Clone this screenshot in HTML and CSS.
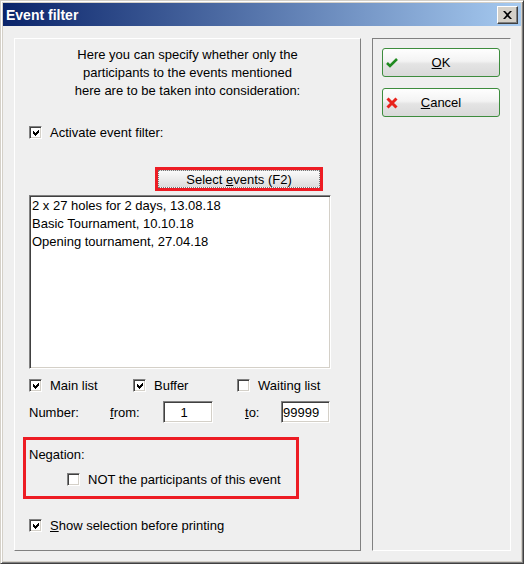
FILE: index.html
```html
<!DOCTYPE html>
<html lang="en">
<head>
    <meta charset="UTF-8">
    <title>Event filter</title>
    <link rel="stylesheet" href="styles.css">
</head>
<body>
    <div class="window">
        <div class="titlebar">
            <span class="title">Event filter</span>
            <button class="close-btn">
                <svg width="9" height="8" viewBox="0 0 9 8"><path d="M0 0h2l2.5 2.5L7 0h2L5.5 4 9 8H7L4.5 5.5 2 8H0l3.5-4z" fill="#000"/></svg>
            </button>
        </div>

        <div class="content">
            <!-- Filter settings -->
            <div class="panel panel-main">
                <p class="intro">Here you can specify whether only the<br>participants to the events mentioned<br>here are to be taken into consideration:</p>

                <label class="check row-activate">
                    <span class="box"><svg viewBox="0 0 9 9"><path d="M1 3l2 2 4-4v3L3 8 1 6z"/></svg></span>
                    Activate event filter:
                </label>

                <div class="mark select-mark">
                    <button class="select-btn">Select <u>e</u>vents (F2)</button>
                </div>

                <div class="listbox">
                    <div>2 x 27 holes for 2 days, 13.08.18</div>
                    <div>Basic Tournament, 10.10.18</div>
                    <div>Opening tournament, 27.04.18</div>
                </div>

                <div class="lists">
                    <label class="check">
                        <span class="box"><svg viewBox="0 0 9 9"><path d="M1 3l2 2 4-4v3L3 8 1 6z"/></svg></span>
                        Main list
                    </label>
                    <label class="check">
                        <span class="box"><svg viewBox="0 0 9 9"><path d="M1 3l2 2 4-4v3L3 8 1 6z"/></svg></span>
                        Buffer
                    </label>
                    <label class="check">
                        <span class="box"></span>
                        Waiting list
                    </label>
                </div>

                <div class="number-row">
                    <span>Number:</span>
                    <span><u>f</u>rom:</span>
                    <span class="field field-from">1</span>
                    <span><u>t</u>o:</span>
                    <span class="field field-to">99999</span>
                </div>

                <div class="mark negation">
                    <div class="negation-label">Negation:</div>
                    <label class="check negation-check">
                        <span class="box"></span>
                        NOT the participants of this event
                    </label>
                </div>

                <label class="check row-show">
                    <span class="box"><svg viewBox="0 0 9 9"><path d="M1 3l2 2 4-4v3L3 8 1 6z"/></svg></span>
                    <span><u>S</u>how selection before printing</span>
                </label>
            </div>

            <!-- Dialog buttons -->
            <div class="panel panel-side">
                <button class="action-btn">
                    <svg width="13" height="10" viewBox="0 0 13 10"><path d="M1 5l3 3 7-7" fill="none" stroke="#1f8a1f" stroke-width="2.6"/></svg>
                    <span><u>O</u>K</span>
                </button>
                <button class="action-btn">
                    <svg width="12" height="12" viewBox="0 0 12 12"><path d="M1.5 1.5l9 9M10.5 1.5l-9 9" fill="none" stroke="#e8231c" stroke-width="3"/></svg>
                    <span><u>C</u>ancel</span>
                </button>
            </div>
        </div>
    </div>
</body>
</html>
```

FILE: styles.css
```css
body {
    margin: 0;
    font-family: "Liberation Sans", Arial, sans-serif;
    font-size: 13px;
    color: #000;
    background: #fff;
}

.window {
    width: 524px;
    height: 564px;
    box-sizing: border-box;
    display: flex;
    flex-direction: column;
    padding: 2px;
    background: #d4d0c8;
    border: 1px solid;
    border-color: #d4d0c8 #404040 #404040 #d4d0c8;
    box-shadow: inset 1px 1px #fff, inset -1px -1px #808080;
}

/* Title bar */
.titlebar {
    flex: none;
    height: 23px;
    display: flex;
    align-items: center;
    justify-content: space-between;
    padding: 0 3px 0 3px;
    background: linear-gradient(to right, #0a246a, #a6caf0);
}

.title {
    color: #fff;
    font-weight: bold;
    font-size: 14px;
}

.close-btn {
    width: 21px;
    height: 18px;
    padding: 0;
    display: flex;
    align-items: center;
    justify-content: center;
    background: #d4d0c8;
    border: 1px solid;
    border-color: #fff #404040 #404040 #fff;
    box-shadow: inset -1px -1px #808080;
}

.content {
    flex: 1;
    display: flex;
    gap: 11px;
    padding: 12px 10px 10px 11px;
    background: #efefef;
}

.panel {
    box-sizing: border-box;
    border: 1px solid;
}

.panel-main {
    width: 347px;
    display: flex;
    flex-direction: column;
    align-items: flex-start;
    border-color: #fff #808080 #808080 #fff;
}

.panel-side {
    width: 139px;
    display: flex;
    flex-direction: column;
    gap: 11px;
    padding: 9px 0 0 9px;
    border-color: #808080 #fff #fff #808080;
}

.intro {
    align-self: stretch;
    margin: 7px 0 0;
    line-height: 18px;
    text-align: center;
}

/* Checkboxes */
.check {
    height: 18px;
    display: flex;
    align-items: center;
    gap: 8px;
    white-space: nowrap;
}

.box {
    width: 13px;
    height: 13px;
    box-sizing: border-box;
    display: flex;
    align-items: center;
    justify-content: center;
    flex: none;
    background: #fff;
    border: 1px solid;
    border-color: #808080 #fff #fff #808080;
    box-shadow: inset 1px 1px #404040, inset -1px -1px #d4d0c8;
}

.box svg {
    width: 9px;
    height: 9px;
    margin: 1px 0 0 1px;
    shape-rendering: crispEdges;
}

.row-activate {
    margin: 23px 0 0 14px;
}

/* Red highlight frames */
.mark {
    box-sizing: border-box;
    border: 3px solid #ed1c24;
}

.select-mark {
    width: 168px;
    height: 24px;
    margin: 26px 0 0 140px;
}

.select-btn {
    width: 100%;
    height: 100%;
    padding: 0;
    font: inherit;
    color: #000;
    border: 1px dotted #777;
    background: linear-gradient(#fafafa, #ececec 50%, #dcdcdc);
}

.listbox {
    width: 302px;
    height: 174px;
    box-sizing: border-box;
    margin: 4px 0 0 14px;
    padding: 1px 2px;
    line-height: 18px;
    background: #fff;
    border: 1px solid;
    border-color: #808080 #fff #fff #808080;
    box-shadow: inset 1px 1px #404040, inset -1px -1px #d4d0c8;
}

.lists {
    display: grid;
    grid-template-columns: 104px 104px 104px;
    margin: 7px 0 0 14px;
}

.number-row {
    display: grid;
    grid-template-columns: 81px 53px 82px 36px 49px;
    align-items: center;
    height: 22px;
    margin: 7px 0 0 14px;
}

.field {
    height: 22px;
    box-sizing: border-box;
    display: flex;
    align-items: center;
    background: #fff;
    border: 1px solid;
    border-color: #808080 #fff #fff #808080;
    box-shadow: inset 1px 1px #404040, inset -1px -1px #d4d0c8;
}

.field-from {
    width: 50px;
    justify-content: center;
    padding-right: 8px;
}

.field-to {
    width: 49px;
    padding-left: 1px;
}

.negation {
    width: 276px;
    height: 62px;
    margin: 14px 0 0 8px;
    padding: 6px 0 0 3px;
}

.negation-label {
    line-height: 18px;
}

.negation-check {
    margin: 6px 0 0 38px;
}

.row-show {
    margin: 17px 0 0 14px;
}

/* OK / Cancel */
.action-btn {
    width: 118px;
    height: 29px;
    display: grid;
    grid-template-columns: 16px 1fr 16px;
    align-items: center;
    padding: 0 3px;
    font: inherit;
    color: #000;
    border: 1px solid #3d8c3d;
    border-radius: 3px;
    background: linear-gradient(#fefefe, #f3f3f3 45%, #e4e4e4 55%, #d9d9d9);
}

.action-btn span {
    text-align: center;
}
```
